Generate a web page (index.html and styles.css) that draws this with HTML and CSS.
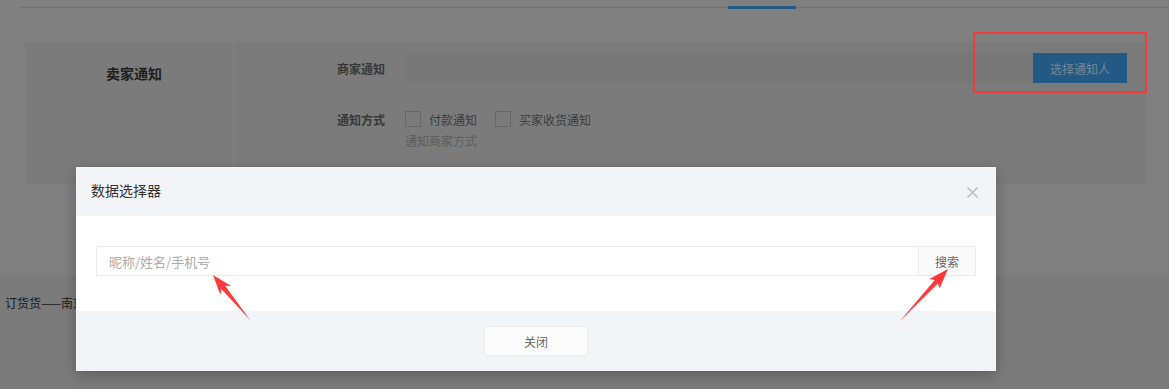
FILE: index.html
```html
<!DOCTYPE html>
<html>
<head>
    <title>卖家通知设置</title>
    <link rel="stylesheet" href="styles.css">
</head>
<body>
    <div class="page">
        <div class="tabs">
            <div class="tab-active"></div>
        </div>

        <div class="section">
            <div class="section-title">卖家通知</div>
            <div class="section-body">
                <div class="form-row">
                    <label class="form-label">商家通知</label>
                    <div class="input-group">
                        <div class="fake-input"></div>
                        <button class="btn-primary">选择通知人</button>
                    </div>
                </div>
                <div class="form-row row-check">
                    <label class="form-label">通知方式</label>
                    <div class="checks">
                        <span class="check"><i class="box"></i>付款通知</span>
                        <span class="check"><i class="box"></i>买家收货通知</span>
                    </div>
                </div>
                <div class="help">通知商家方式</div>
            </div>
        </div>

        <div class="spacer"></div>

        <div class="bottom">
            <p class="crumb">订货货——南京</p>
        </div>
    </div>

    <div class="modal">
        <div class="modal-header">
            <span class="modal-title">数据选择器</span>
            <svg class="modal-close" width="11" height="11" viewBox="0 0 11 11">
                <path d="M0.5 0.5 L10.5 10.5 M10.5 0.5 L0.5 10.5" stroke="#c2c2c2" stroke-width="1.6" fill="none"/>
            </svg>
        </div>
        <div class="modal-body">
            <div class="search-group">
                <input type="text" class="search-input" placeholder="昵称/姓名/手机号">
                <button class="btn-search">搜索</button>
            </div>
        </div>
        <div class="modal-footer">
            <button class="btn-close">关闭</button>
        </div>
    </div>

    <!-- annotation marks drawn over the screenshot -->
    <svg class="marks" width="1169" height="389" viewBox="0 0 1169 389">
        <rect x="974" y="33" width="172" height="59" fill="none" stroke="#f23a3a" stroke-width="2"/>
        <polygon fill="#fd3a3a" points="213,275 231.2,286 225.1,285.8 250.5,320.5 221.3,289 220.4,295"/>
        <polygon fill="#fd3a3a" points="948,269 939.6,288.4 937.9,283.4 899.5,321.5 934.8,279.9 929.3,278.9"/>
    </svg>
</body>
</html>
```

FILE: styles.css
```css
body {
    margin: 0;
    font-family: "Noto Sans CJK SC", "Noto Sans", sans-serif;
    font-size: 12px;
    background-color: #808080;
    position: relative;
    width: 1169px;
    height: 389px;
    overflow: hidden;
}

.page {
    display: flex;
    flex-direction: column;
    height: 389px;
}

.tabs {
    display: flex;
    height: 7px;
    margin-left: 20px;
    border-bottom: 1px solid #727272;
}

.tab-active {
    margin-left: 708px;
    margin-top: 6px;
    width: 68px;
    height: 3px;
    background-color: #235a85;
}

.section {
    display: flex;
    gap: 3px;
    margin: 34px 23px 0 25px;
    height: 142px;
    background-color: #7e7e7e;
}

.section-title {
    width: 207px;
    padding: 21px 0 0 81px;
    box-sizing: border-box;
    line-height: 20px;
    font-size: 14px;
    font-weight: bold;
    color: #202020;
    background-color: #7b7b7b;
}

.section-body {
    flex: 1;
    padding: 11px 19px 0 0;
    background-color: #7b7b7b;
}

.form-row {
    display: flex;
    align-items: center;
}

.form-label {
    width: 150px;
    margin-right: 20px;
    text-align: right;
    font-weight: bold;
    color: #383838;
}

.input-group {
    display: flex;
    flex: 1;
    height: 30px;
}

.fake-input {
    flex: 1;
    background-color: #777777;
}

.btn-primary {
    width: 94px;
    border: none;
    font-family: inherit;
    font-size: 12px;
    color: #7a8896;
    background-color: #235a85;
}

.row-check {
    margin-top: 26px;
    height: 20px;
}

.checks {
    display: flex;
    gap: 18px;
    color: #3c3c3c;
}

.check {
    display: flex;
    align-items: center;
    gap: 8px;
}

.box {
    width: 14px;
    height: 14px;
    border: 1px solid #676767;
}

.help {
    margin: 2px 0 0 170px;
    line-height: 20px;
    color: #5c5c5c;
}

.spacer {
    height: 91px;
}

.bottom {
    flex: 1;
    padding: 19px 5px 0;
    background-color: #7b7b7c;
}

.crumb {
    margin: 0;
    line-height: 18px;
    color: #1a1a1a;
}

.modal {
    position: absolute;
    left: 76px;
    top: 167px;
    width: 920px;
    background-color: #fff;
    box-shadow: 0 4px 14px rgba(0, 0, 0, 0.25);
}

.modal-header {
    display: flex;
    justify-content: space-between;
    align-items: center;
    height: 49px;
    padding: 0 18px 0 15px;
    background-color: #f3f4f8;
}

.modal-title {
    font-size: 14px;
    color: #333;
    margin-top: -4px;
}

.modal-close {
    margin-top: 2px;
}

.modal-body {
    padding: 30px 20px 35px 20px;
}

.search-group {
    display: flex;
    height: 30px;
}

.search-input {
    flex: 1;
    margin: 0;
    padding: 0 12px;
    border: 1px solid #ebebeb;
    border-right: none;
    font-family: inherit;
    font-size: 13px;
    outline: none;
}

.search-input::placeholder {
    color: #ababab;
}

.btn-search {
    width: 58px;
    border: 1px solid #ebebeb;
    font-family: inherit;
    font-size: 12px;
    color: #666;
    background-color: #fafafa;
}

.modal-footer {
    display: flex;
    justify-content: center;
    padding: 15px 0;
    background-color: #f3f4f8;
}

.btn-close {
    width: 104px;
    height: 30px;
    border: 1px solid #ececec;
    font-family: inherit;
    font-size: 12px;
    color: #666;
    background-color: #fbfbfb;
}

.marks {
    position: absolute;
    left: 0;
    top: 0;
    pointer-events: none;
}
```
